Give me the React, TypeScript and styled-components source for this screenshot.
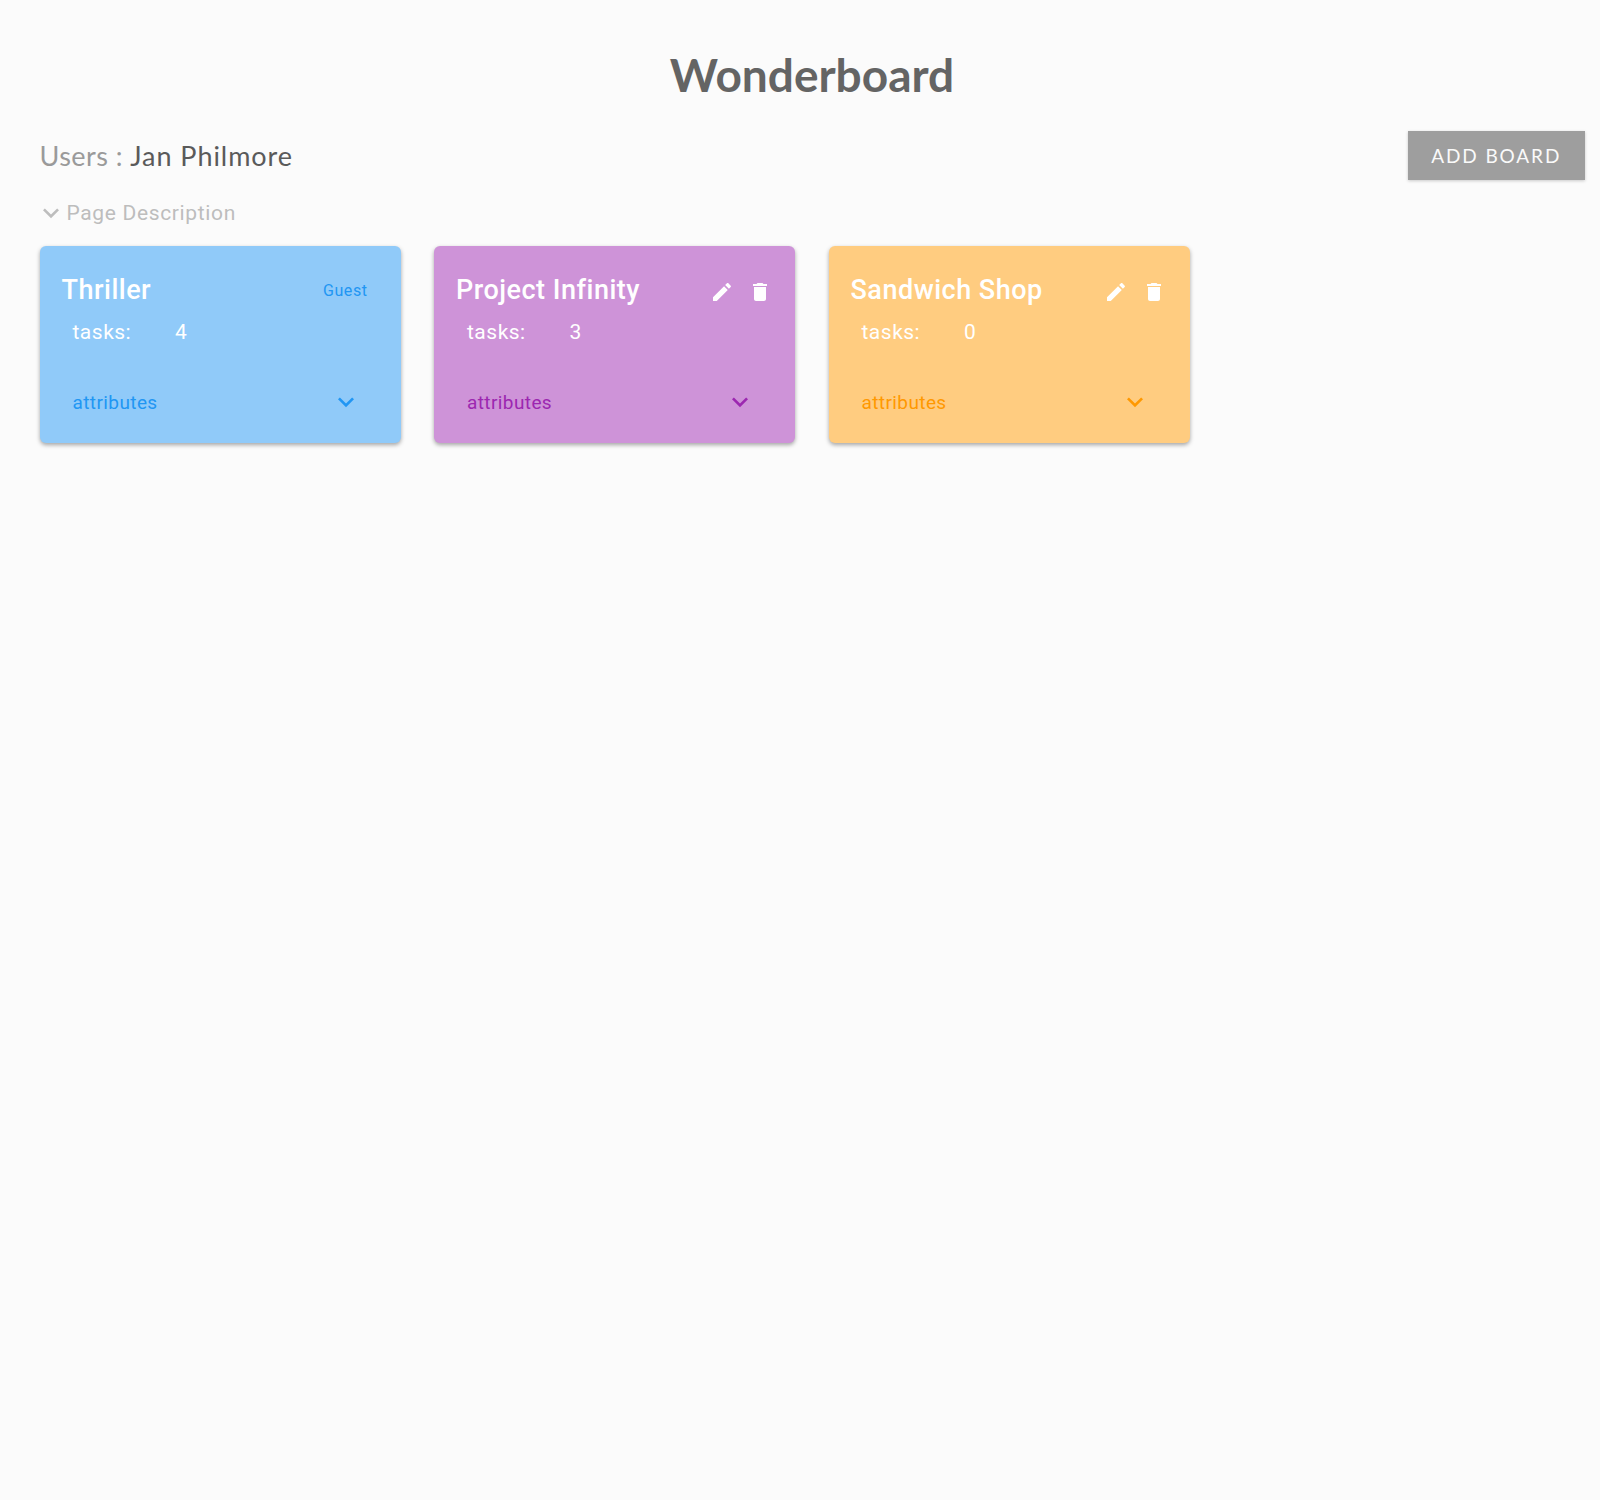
import { createGlobalStyle, styled } from "styled-components";

const GlobalStyle = createGlobalStyle`
  html, body {
    margin: 0;
    padding: 0;
    background: #fbfbfb;
    font-family: "Roboto", sans-serif;
  }
`;

const Page = styled.div`
  min-height: 1500px;
  box-sizing: border-box;
  padding: 50px 15.5px 0 39.5px;
`;

const Title = styled.h1`
  margin: 0;
  height: 50px;
  line-height: 50px;
  text-align: center;
  font-family: "Lato", sans-serif;
  font-size: 46px;
  font-weight: 700;
  color: #646464;
`;

const TopBar = styled.div`
  display: flex;
  justify-content: space-between;
  align-items: center;
  margin-top: 31px;
  height: 49px;
`;

const Users = styled.div`
  font-family: "Lato", sans-serif;
  font-size: 27px;
  letter-spacing: 0.45px;
  color: #9a9a9a;
`;

const UserName = styled.span`
  letter-spacing: 0.95px;
  color: #5a5a5a;
`;

const AddButton = styled.button`
  width: 176.5px;
  height: 49px;
  border: 0;
  background: #9e9e9e;
  color: #fafafa;
  font-family: "Lato", sans-serif;
  font-size: 19px;
  letter-spacing: 1.9px;
  box-shadow: 0 1px 3px rgba(0, 0, 0, 0.2);
`;

const Description = styled.div`
  display: flex;
  align-items: center;
  margin-top: 17px;
  height: 32px;
  font-size: 21px;
  letter-spacing: 0.65px;
  color: #bdbdbd;
`;

const Chevron = styled.svg<{ $color: string }>`
  width: 32px;
  height: 32px;
  flex: none;
  fill: ${(p) => p.$color};
`;

const DescriptionChevron = styled(Chevron)`
  margin: 0 0 0 -5px;
`;

const CardRow = styled.div`
  display: flex;
  gap: 33.5px;
  margin-top: 17px;
`;

const Card = styled.div<{ $bg: string }>`
  width: 361px;
  height: 197px;
  box-sizing: border-box;
  padding: 32px 0 0 22px;
  border-radius: 6px;
  background: ${(p) => p.$bg};
  color: #fff;
  box-shadow: 0 2px 4px rgba(0, 0, 0, 0.35);
`;

const CardHead = styled.div`
  display: flex;
  justify-content: space-between;
  align-items: center;
  height: 24px;
  padding-right: 23.5px;
`;

const CardTitle = styled.div`
  font-size: 27px;
  font-weight: 500;
  letter-spacing: 0.5px;
`;

const Role = styled.div<{ $color: string }>`
  padding-right: 9.5px;
  font-size: 16px;
  letter-spacing: 0.55px;
  color: ${(p) => p.$color};
`;

const Actions = styled.div`
  display: flex;
  gap: 14px;
`;

const ActionIcon = styled.svg`
  width: 24px;
  height: 24px;
  fill: #fff;
  margin-top: 4px;
`;

const Tasks = styled.div`
  display: grid;
  grid-template-columns: 102.5px auto;
  justify-content: start;
  margin-top: 18px;
  padding-left: 11px;
  font-size: 21px;
  letter-spacing: 0.5px;
`;

const Attributes = styled.div<{ $color: string }>`
  display: flex;
  justify-content: space-between;
  align-items: center;
  margin-top: 42px;
  padding: 0 39px 0 11px;
  font-size: 19px;
  letter-spacing: 0.4px;
  color: ${(p) => p.$color};
`;

const ExpandIcon = ({ color, large }: { color: string; large?: boolean }) => {
  const Icon = large ? DescriptionChevron : Chevron;
  return (
    <Icon $color={color} viewBox="0 0 24 24">
      <path d="M16.59 8.59L12 13.17 7.41 8.59 6 10l6 6 6-6z" />
    </Icon>
  );
};

const boards = [
  { name: "Thriller", tasks: 4, bg: "#90caf9", accent: "#2196f3", guest: true },
  { name: "Project Infinity", tasks: 3, bg: "#ce93d8", accent: "#9c27b0", guest: false },
  { name: "Sandwich Shop", tasks: 0, bg: "#ffcc80", accent: "#ff9800", guest: false },
];

const App = () => {
  return (
    <Page>
      <GlobalStyle />
      <Title>Wonderboard</Title>
      <TopBar>
        <Users>
          Users : <UserName>Jan Philmore</UserName>
        </Users>
        <AddButton>ADD BOARD</AddButton>
      </TopBar>
      <Description>
        <ExpandIcon color="#bdbdbd" large />
        Page Description
      </Description>
      <CardRow>
        {boards.map((board) => (
          <Card key={board.name} $bg={board.bg}>
            <CardHead>
              <CardTitle>{board.name}</CardTitle>
              {board.guest ? (
                <Role $color={board.accent}>Guest</Role>
              ) : (
                <Actions>
                  <ActionIcon viewBox="0 0 24 24">
                    <path d="M3 17.25V21h3.75L17.81 9.94l-3.75-3.75L3 17.25zM20.71 7.04c.39-.39.39-1.02 0-1.41l-2.34-2.34c-.39-.39-1.02-.39-1.41 0l-1.83 1.83 3.75 3.75 1.83-1.83z" />
                  </ActionIcon>
                  <ActionIcon viewBox="0 0 24 24">
                    <path d="M6 19c0 1.1.9 2 2 2h8c1.1 0 2-.9 2-2V7H6v12zM19 4h-3.5l-1-1h-5l-1 1H5v2h14V4z" />
                  </ActionIcon>
                </Actions>
              )}
            </CardHead>
            <Tasks>
              <span>tasks:</span>
              <span>{board.tasks}</span>
            </Tasks>
            <Attributes $color={board.accent}>
              attributes
              <ExpandIcon color={board.accent} />
            </Attributes>
          </Card>
        ))}
      </CardRow>
    </Page>
  );
};

export default App;
